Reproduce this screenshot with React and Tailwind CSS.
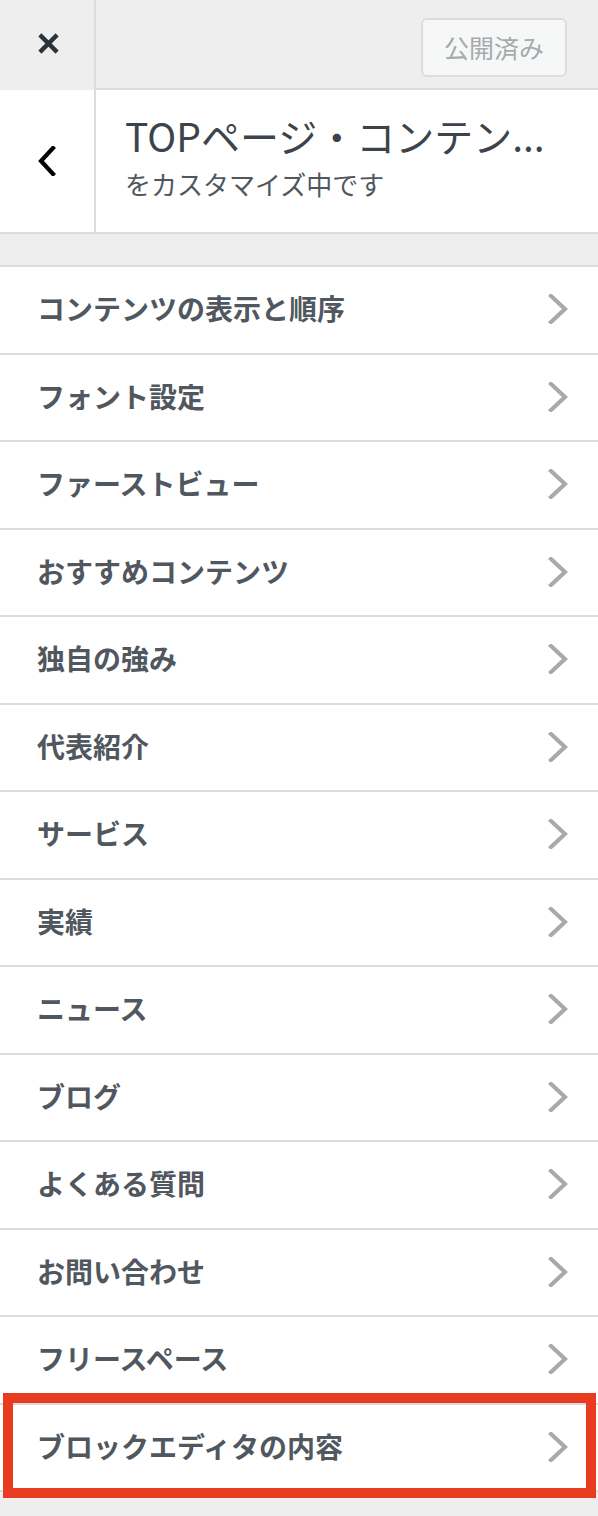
import React from 'react';

const items = [
    'コンテンツの表示と順序',
    'フォント設定',
    'ファーストビュー',
    'おすすめコンテンツ',
    '独自の強み',
    '代表紹介',
    'サービス',
    '実績',
    'ニュース',
    'ブログ',
    'よくある質問',
    'お問い合わせ',
    'フリースペース',
    'ブロックエディタの内容',
];

const font = { fontFamily: '"Noto Sans CJK JP", "Noto Sans", sans-serif' };

function ChevronRight() {
    return (
        <svg width="20" height="30" viewBox="0 0 20 30" className="shrink-0 mt-[2px]">
            <polyline points="3,2 17,15 3,28" fill="none" stroke="#a7aaad" strokeWidth="4.2" strokeLinecap="square" strokeLinejoin="miter" />
        </svg>
    );
}

function Row({ label, highlighted }) {
    return (
        <div className="relative h-[87.5px] border-t-2 border-[#dcdcde] bg-white flex items-center justify-between pl-[37px] pr-[30px] pb-[3px]">
            <span className="text-[28px] font-bold text-[#50575e] leading-none">{label}</span>
            <ChevronRight />
            {highlighted && (
                <div className="absolute top-[-12px] bottom-[-8px] left-[3px] right-[2px] border-[10px] border-[#e83b1f] pointer-events-none"></div>
            )}
        </div>
    );
}

export default function App() {
    return (
        <div className="w-[598px] min-h-[1516px] bg-[#eeeeee]" style={font}>
            {/* Header */}
            <div className="flex border-b-2 border-[#dcdcde]">
                <div className="w-[94px] flex flex-col">
                    <div className="h-[90px] bg-[#eeeeee] flex items-center justify-center pb-[4px] pl-[2px]">
                        <svg width="23" height="23" viewBox="0 0 24 24">
                            <path d="M3 3 L21 21 M21 3 L3 21" stroke="#2c3338" strokeWidth="4.5" fill="none" />
                        </svg>
                    </div>
                    <div className="h-[142px] bg-white flex items-center justify-center">
                        <svg width="20" height="30" viewBox="0 0 20 30">
                            <polyline points="16,2 4,15 16,28" fill="none" stroke="#000000" strokeWidth="4.2" strokeLinecap="square" />
                        </svg>
                    </div>
                </div>
                <div className="w-[2px] bg-[#dcdcde]"></div>
                <div className="flex-1 flex flex-col">
                    <div className="h-[90px] border-b-2 border-[#dcdcde] flex justify-end items-start pt-[18px] pr-[31px]">
                        <div className="w-[146px] h-[59px] rounded-[6px] border-2 border-[#dcdcde] bg-[#f6f7f7] flex items-center justify-center text-[25px] text-[#a7aaad]">
                            公開済み
                        </div>
                    </div>
                    <div className="h-[142px] bg-white pl-[29px] pt-[22px]">
                        <div className="text-[39px] leading-[46px] text-[#3c434a] whitespace-nowrap">TOPページ・コンテン...</div>
                        <div className="mt-[11px] text-[26px] leading-[30px] text-[#50575e]">をカスタマイズ中です</div>
                    </div>
                </div>
            </div>

            {/* Sections */}
            <div className="mt-[31px] border-b-2 border-[#dcdcde]">
                {items.map((label, i) => (
                    <Row key={label} label={label} highlighted={i === items.length - 1} />
                ))}
            </div>
        </div>
    );
}
